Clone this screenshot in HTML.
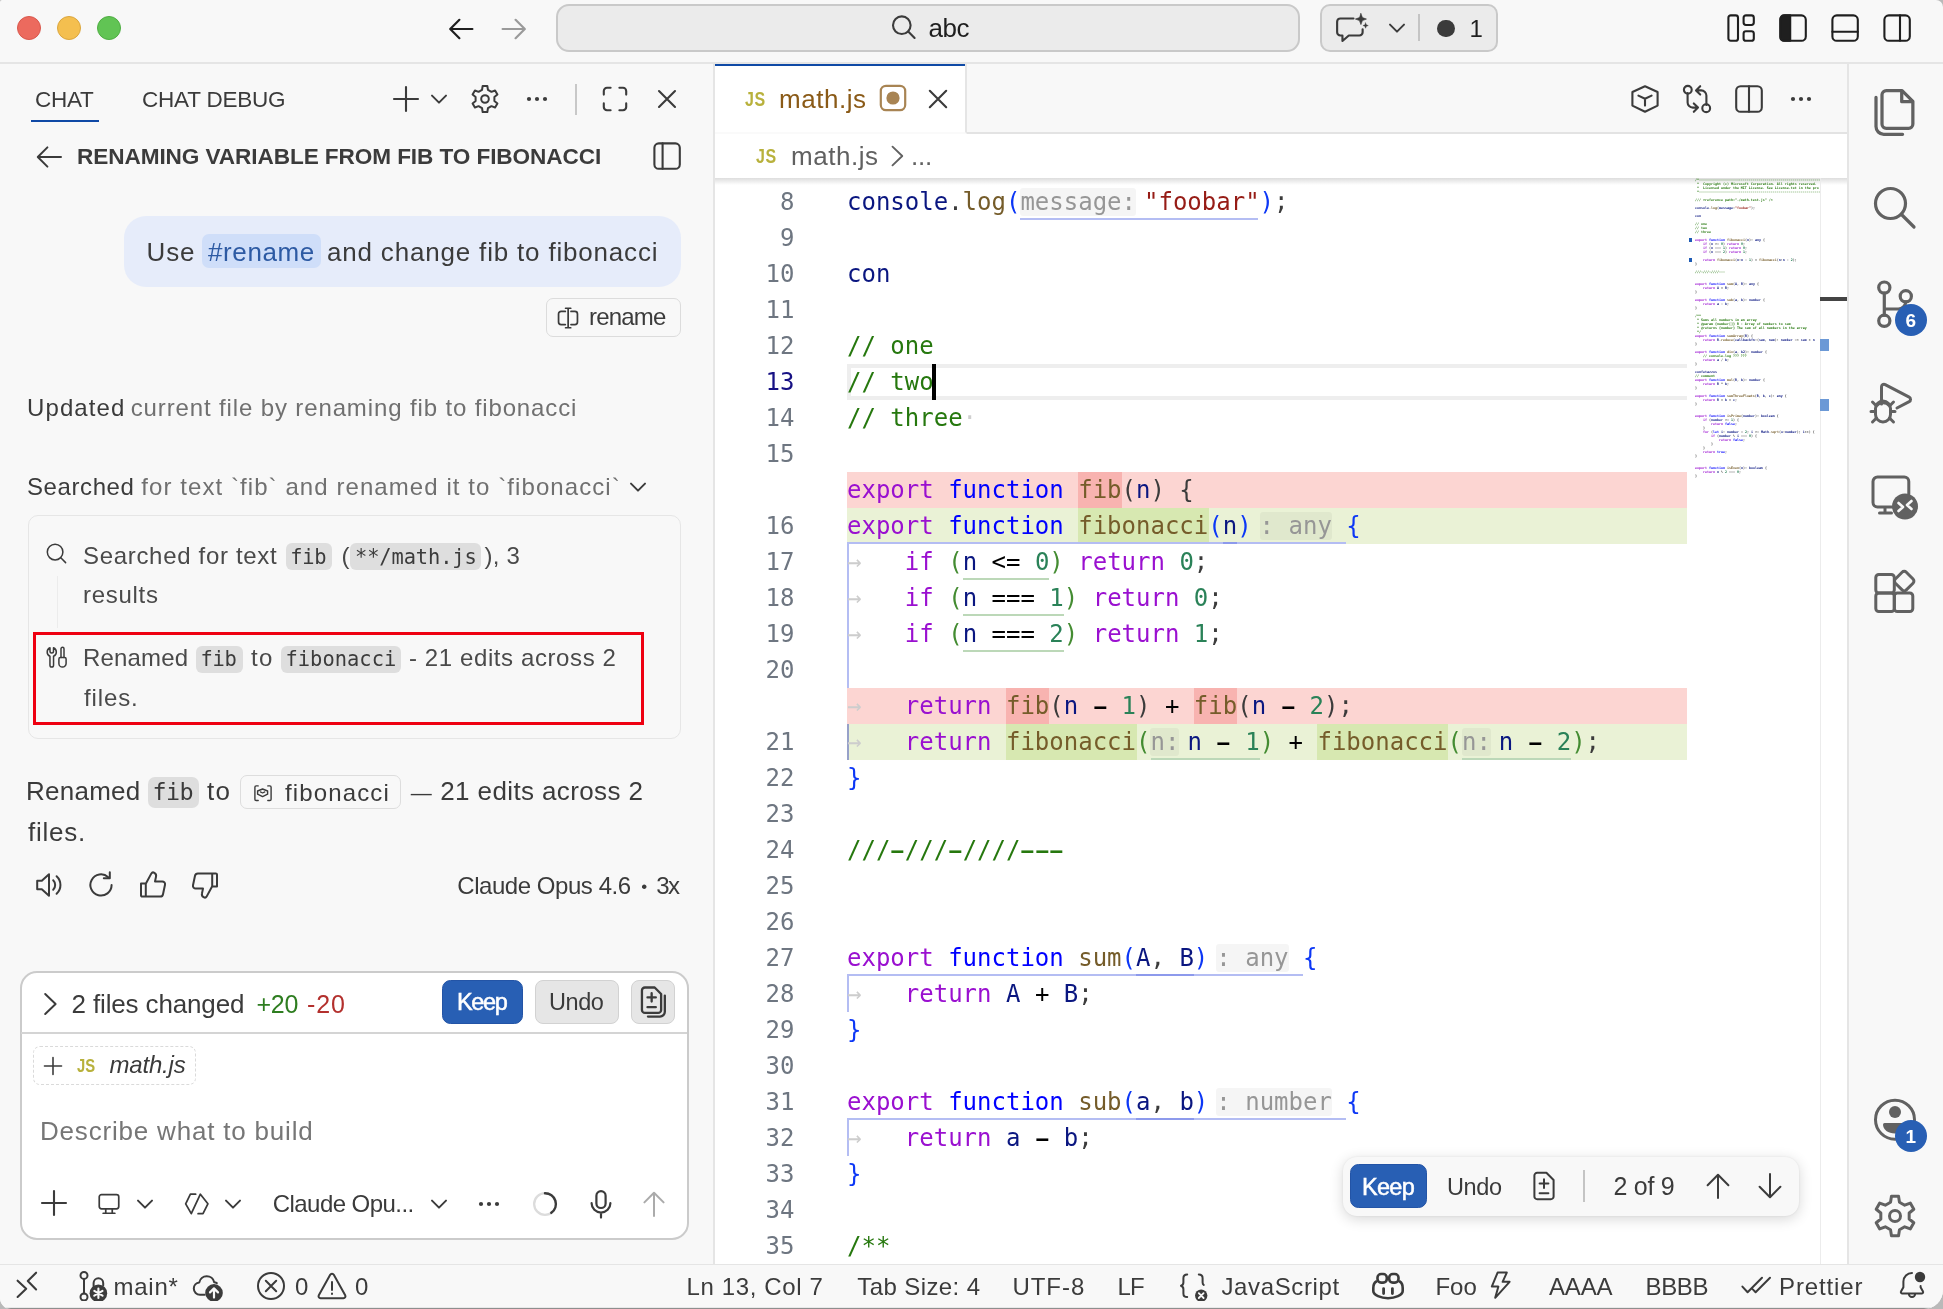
<!DOCTYPE html>
<html lang="en"><head><meta charset="utf-8"><title>math.js</title><style>
html,body{margin:0;padding:0;background:#b9b9b9;}
#root{will-change:transform;border-radius:2px 7px 19px 11px;position:relative;width:1943px;height:1309px;overflow:hidden;font-family:"Liberation Sans",sans-serif;}
#root div,#root svg,#root span.t{position:absolute;box-sizing:border-box;}
span.t{white-space:pre;}
.code{position:absolute;white-space:pre;font:24px/36px "DejaVu Sans Mono","Liberation Mono",monospace;color:#3b3b3b;}
.code span{position:static;}
</style></head><body><div id="root">
<div style="left:0px;top:0px;width:1943px;height:1309px;background:#f8f8f8"></div>
<div style="left:0px;top:62px;width:1943px;height:2px;background:#e5e5e5"></div>
<div style="left:715px;top:64px;width:1133px;height:1200px;background:#fff"></div>
<div style="left:713px;top:64px;width:2px;height:1200px;background:#e5e5e5"></div>
<div style="left:1847px;top:64px;width:2px;height:1200px;background:#e5e5e5"></div>
<div style="left:1849px;top:64px;width:94px;height:1200px;background:#f8f8f8"></div>
<div style="left:0px;top:1264px;width:1943px;height:1px;background:#e5e5e5"></div>
<div style="left:0px;top:1265px;width:1943px;height:44px;background:#f8f8f8"></div>
<div style="left:17px;top:16px;width:24px;height:24px;background:#ec6a5e;border-radius:50%;border:1px solid #d9584d"></div>
<div style="left:57px;top:16px;width:24px;height:24px;background:#f4bf4f;border-radius:50%;border:1px solid #dba63e"></div>
<div style="left:97px;top:16px;width:24px;height:24px;background:#61c454;border-radius:50%;border:1px solid #4fae43"></div>
<svg style="left:445px;top:13px;" width="32" height="32" viewBox="0 0 16 16" fill="none" stroke="#1f1f1f" stroke-width="1.1" stroke-linecap="round" stroke-linejoin="round"><path d="M13.700 8H2.800M7.200 3.400L2.600 8l4.600 4.600"/></svg>
<svg style="left:498px;top:13px;" width="32" height="32" viewBox="0 0 16 16" fill="none" stroke="#9a9a9a" stroke-width="1.1" stroke-linecap="round" stroke-linejoin="round"><path d="M2.300 8h10.900M8.800 3.400L13.400 8l-4.600 4.600"/></svg>
<div style="left:556px;top:4px;width:744px;height:48px;background:#ebebeb;border:2px solid #c9c9c9;border-radius:13px"></div>
<svg style="left:888px;top:11px;" width="32" height="32" viewBox="0 0 16 16" fill="none" stroke="#3b3b3b" stroke-width="1.05" stroke-linecap="round" stroke-linejoin="round"><circle cx="6.900" cy="7.100" r="4.400"/><path d="M10.100 10.300l3.200 3.200"/></svg>
<span class="t" style='left:928.50px;top:13.00px;font:400 26px/30px "Liberation Sans", sans-serif;color:#1f1f1f;letter-spacing:-0.460px;'>abc</span>
<div style="left:1320px;top:4px;width:178px;height:48px;background:#ebebeb;border:2px solid #c9c9c9;border-radius:10px"></div>
<svg style="left:1335px;top:11px;" width="34" height="34" viewBox="0 0 16 16" fill="none" stroke="#3b3b3b" stroke-width="1.0" stroke-linecap="round" stroke-linejoin="round"><path d="M2.5 3.5h6.2M2.5 3.5a1.5 1.5 0 0 0-1.5 1.5v5a1.5 1.5 0 0 0 1.5 1.5h1v2.6l3-2.6h5a1.5 1.5 0 0 0 1.5-1.5V8.6"/><path d="M12.2 1.2l.7 1.9 1.9.7-1.9.7-.7 1.9-.7-1.9-1.9-.7 1.9-.7z" fill="#3b3b3b" stroke-width=".3"/><path d="M14.4 5.6l.35.9.9.35-.9.35-.35.9-.35-.9-.9-.35.9-.35z" fill="#3b3b3b" stroke-width=".2"/></svg>
<svg style="left:1381px;top:12px;" width="32" height="32" viewBox="0 0 16 16" fill="none" stroke="#3b3b3b" stroke-width="1.0" stroke-linecap="round" stroke-linejoin="round"><path d="M4.500 6.300L8 9.800l3.500-3.500"/></svg>
<div style="left:1418px;top:14px;width:2px;height:27px;background:#c4c4c4"></div>
<div style="left:1437px;top:19.5px;width:17.5px;height:17.5px;background:#3b3b3b;border-radius:50%"></div>
<span class="t" style='left:1469.50px;top:14.50px;font:400 24px/27px "Liberation Sans", sans-serif;color:#1f1f1f;letter-spacing:0.000px;'>1</span>
<svg style="left:1725px;top:12px;" width="32" height="32" viewBox="0 0 16 16" fill="none" stroke="#1f1f1f" stroke-width="1.05" stroke-linecap="round" stroke-linejoin="round"><rect x="1.700" y="1.700" width="4.800" height="12.700" rx="1.200"/><rect x="9.300" y="1.700" width="5.100" height="4.800" rx="1.200"/><rect x="9.300" y="9.600" width="5.100" height="4.800" rx="1.200"/></svg>
<svg style="left:1777px;top:12px;" width="32" height="32" viewBox="0 0 16 16" fill="none" stroke="#1f1f1f" stroke-width="1.05" stroke-linecap="round" stroke-linejoin="round"><rect x="1.700" y="1.700" width="12.700" height="12.700" rx="2.200"/><path d="M3.400 1.700h3.200v12.700H3.400a1.700 1.700 0 0 1-1.700-1.700V3.400A1.700 1.700 0 0 1 3.400 1.700z" fill="#1f1f1f"/></svg>
<svg style="left:1829px;top:12px;" width="32" height="32" viewBox="0 0 16 16" fill="none" stroke="#1f1f1f" stroke-width="1.05" stroke-linecap="round" stroke-linejoin="round"><rect x="1.700" y="1.700" width="12.700" height="12.700" rx="2.200"/><path d="M1.700 9.900h12.700"/></svg>
<svg style="left:1881px;top:12px;" width="32" height="32" viewBox="0 0 16 16" fill="none" stroke="#1f1f1f" stroke-width="1.05" stroke-linecap="round" stroke-linejoin="round"><rect x="1.700" y="1.700" width="12.700" height="12.700" rx="2.200"/><path d="M9.500 1.700v12.700"/></svg>
<span class="t" style='left:35.00px;top:87.00px;font:400 22.5px/25px "Liberation Sans", sans-serif;color:#3b3b3b;letter-spacing:-0.278px;'>CHAT</span>
<div style="left:31px;top:120px;width:68px;height:2px;background:#0f49a6"></div>
<span class="t" style='left:142.00px;top:87.00px;font:400 22.5px/25px "Liberation Sans", sans-serif;color:#3b3b3b;letter-spacing:-0.205px;'>CHAT DEBUG</span>
<svg style="left:390px;top:82.5px;" width="32" height="32" viewBox="0 0 16 16" fill="none" stroke="#3b3b3b" stroke-width="1.05" stroke-linecap="round" stroke-linejoin="round"><path d="M8 2v12M2 8h12"/></svg>
<svg style="left:423px;top:82.5px;" width="32" height="32" viewBox="0 0 16 16" fill="none" stroke="#3b3b3b" stroke-width="1.0" stroke-linecap="round" stroke-linejoin="round"><path d="M4.500 6.300L8 9.800l3.500-3.500"/></svg>
<svg style="left:469px;top:83px;" width="32" height="32" viewBox="0 0 16 16" fill="none" stroke="#3b3b3b" stroke-width="1.0" stroke-linecap="round" stroke-linejoin="round"><path d="M6.52 3.43L6.83 1.50L9.17 1.50L9.48 3.43L11.21 4.43L13.04 3.74L14.21 5.76L12.70 7.00L12.70 9.00L14.21 10.24L13.04 12.26L11.21 11.57L9.48 12.57L9.17 14.50L6.83 14.50L6.52 12.57L4.79 11.57L2.96 12.26L1.79 10.24L3.30 9.00L3.30 7.00L1.79 5.76L2.96 3.74L4.79 4.43Z"/><circle cx="8" cy="8" r="1.9"/></svg>
<svg style="left:520.5px;top:83px;" width="32" height="32" viewBox="0 0 16 16" fill="none" stroke="#3b3b3b" stroke-width="1" stroke-linecap="round" stroke-linejoin="round"><circle cx="4" cy="8" r="1.050" fill="#3b3b3b" stroke="none"/><circle cx="8" cy="8" r="1.050" fill="#3b3b3b" stroke="none"/><circle cx="12" cy="8" r="1.050" fill="#3b3b3b" stroke="none"/></svg>
<div style="left:575px;top:84px;width:2px;height:31px;background:#c8c8c8"></div>
<svg style="left:599px;top:82.5px;" width="32" height="32" viewBox="0 0 16 16" fill="none" stroke="#3b3b3b" stroke-width="1.05" stroke-linecap="round" stroke-linejoin="round"><path d="M2.400 5.800V4A1.600 1.600 0 0 1 4 2.400h1.800M10.200 2.400H12A1.600 1.600 0 0 1 13.600 4v1.800M13.600 10.200V12a1.600 1.600 0 0 1-1.600 1.600h-1.800M5.800 13.600H4A1.600 1.600 0 0 1 2.400 12v-1.800"/></svg>
<svg style="left:651px;top:83px;" width="32" height="32" viewBox="0 0 16 16" fill="none" stroke="#3b3b3b" stroke-width="1.05" stroke-linecap="round" stroke-linejoin="round"><path d="M4 4l8 8M12 4l-8 8"/></svg>
<svg style="left:33px;top:141px;" width="32" height="32" viewBox="0 0 16 16" fill="none" stroke="#3b3b3b" stroke-width="1.0" stroke-linecap="round" stroke-linejoin="round"><path d="M14 8H2.6M7.2 3.2L2.4 8l4.8 4.8"/></svg>
<span class="t" style='left:77.00px;top:144.00px;font:700 22.6px/25px "Liberation Sans", sans-serif;color:#3b3b3b;letter-spacing:-0.087px;'>RENAMING VARIABLE FROM FIB TO FIBONACCI</span>
<svg style="left:651px;top:140px;" width="32" height="32" viewBox="0 0 16 16" fill="none" stroke="#3b3b3b" stroke-width="1.05" stroke-linecap="round" stroke-linejoin="round"><rect x="1.700" y="1.700" width="12.700" height="12.700" rx="2.200"/><path d="M5.800 1.700v12.700"/></svg>
<div style="left:124px;top:216px;width:557px;height:71px;background:#e6ecfa;border-radius:22px"></div>
<span class="t" style='left:146.50px;top:236.50px;font:400 26px/30px "Liberation Sans", sans-serif;color:#3b3b3b;letter-spacing:0.862px;'>Use</span>
<div style="left:202px;top:234px;width:119px;height:34px;background:#cfdef9;border-radius:7px"></div>
<span class="t" style='left:208.00px;top:236.50px;font:400 26px/30px "Liberation Sans", sans-serif;color:#2d5aa3;letter-spacing:0.599px;'>#rename</span>
<span class="t" style='left:327.00px;top:236.50px;font:400 26px/30px "Liberation Sans", sans-serif;color:#3b3b3b;letter-spacing:0.815px;'>and change fib to fibonacci</span>
<div style="left:545.5px;top:297.5px;width:135px;height:39px;border:1.5px solid #dcdcdc;border-radius:7px;background:#f8f8f8"></div>
<svg style="left:556px;top:306px;" width="24" height="24" viewBox="0 0 16 16" fill="none" stroke="#3b3b3b" stroke-width="1.15" stroke-linecap="round" stroke-linejoin="round"><path d="M6.2 3.6H3.4A1.7 1.7 0 0 0 1.7 5.3v5.4a1.7 1.7 0 0 0 1.7 1.7h2.8M10 3.6h2.6a1.7 1.7 0 0 1 1.7 1.7v5.4a1.7 1.7 0 0 1-1.7 1.7H10M8.1 1.5v13M6.4 1.5h3.4M6.4 14.5h3.4"/></svg>
<span class="t" style='left:589.00px;top:303.00px;font:400 24px/27px "Liberation Sans", sans-serif;color:#3b3b3b;letter-spacing:-0.805px;'>rename</span>
<span class="t" style='left:27.00px;top:393.70px;font:400 24px/27px "Liberation Sans", sans-serif;color:#3b3b3b;letter-spacing:1.102px;'>Updated</span>
<span class="t" style='left:130.75px;top:393.70px;font:400 24px/27px "Liberation Sans", sans-serif;color:#707070;letter-spacing:0.868px;'>current file by renaming fib to fibonacci</span>
<span class="t" style='left:27.00px;top:472.60px;font:400 24px/27px "Liberation Sans", sans-serif;color:#3b3b3b;letter-spacing:0.587px;'>Searched</span>
<span class="t" style='left:141.25px;top:472.60px;font:400 24px/27px "Liberation Sans", sans-serif;color:#707070;letter-spacing:1.077px;'>for text `fib` and renamed it to `fibonacci`</span>
<svg style="left:622px;top:471px;" width="32" height="32" viewBox="0 0 16 16" fill="none" stroke="#3b3b3b" stroke-width="1.0" stroke-linecap="round" stroke-linejoin="round"><path d="M4.500 6.300L8 9.800l3.500-3.500"/></svg>
<div style="left:27.5px;top:514.5px;width:653.5px;height:224.5px;border:1.5px solid #e6e6e6;border-radius:10px;background:#f8f8f8"></div>
<svg style="left:44px;top:541px;" width="24" height="24" viewBox="0 0 16 16" fill="none" stroke="#3b3b3b" stroke-width="1.0" stroke-linecap="round" stroke-linejoin="round"><circle cx="7.4" cy="7.4" r="5.2"/><path d="M11.2 11.2l3.2 3.2"/></svg>
<div style="left:56.5px;top:576px;width:1.5px;height:52px;background:#ececec"></div>
<span class="t" style='left:83.00px;top:541.75px;font:400 24px/27px "Liberation Sans", sans-serif;color:#4a4a4a;letter-spacing:0.681px;'>Searched for text</span>
<div style="left:286px;top:543px;width:46px;height:27px;background:#dedede;border-radius:6px"></div>
<span class="t" style='left:290.25px;top:544.75px;font:400 20.4px/24px "DejaVu Sans Mono", "Liberation Mono", monospace;color:#3b3b3b;letter-spacing:-0.276px;'>fib</span>
<span class="t" style='left:341.50px;top:541.75px;font:400 24px/27px "Liberation Sans", sans-serif;color:#4a4a4a;letter-spacing:0.000px;'>(</span>
<div style="left:350px;top:543px;width:131px;height:27px;background:#dedede;border-radius:6px"></div>
<span class="t" style='left:355.00px;top:544.75px;font:400 20.4px/24px "DejaVu Sans Mono", "Liberation Mono", monospace;color:#3b3b3b;letter-spacing:-0.110px;'>**/math.js</span>
<span class="t" style='left:484.50px;top:541.75px;font:400 24px/27px "Liberation Sans", sans-serif;color:#4a4a4a;letter-spacing:0.224px;'>), 3</span>
<span class="t" style='left:83.00px;top:581.00px;font:400 24px/27px "Liberation Sans", sans-serif;color:#4a4a4a;letter-spacing:0.719px;'>results</span>
<div style="left:33px;top:632px;width:611px;height:92.5px;border:3.5px solid #ee0011"></div>
<svg style="left:45px;top:645px;" width="24" height="24" viewBox="0 0 24 24" fill="none" stroke="#3b3b3b" stroke-width="1.5" stroke-linecap="round" stroke-linejoin="round"><path d="M5 2.700V6.300a1.750 1.750 0 0 0 3.500 0V2.700A4.700 4.700 0 0 1 8.550 11.300V20.200a1.800 1.800 0 0 1-3.600 0V11.300A4.700 4.700 0 0 1 5 2.700z"/><path d="M16 12.400V3.800a1.500 1.500 0 0 1 3 0V12.400"/><path d="M13.900 13.900a1.500 1.500 0 0 1 1.500-1.500h4.200a1.500 1.500 0 0 1 1.500 1.500v4.500a3.600 3.600 0 0 1-7.200 0z"/></svg>
<span class="t" style='left:83.00px;top:644.00px;font:400 24px/27px "Liberation Sans", sans-serif;color:#4a4a4a;letter-spacing:0.173px;'>Renamed</span>
<div style="left:195.75px;top:646px;width:47px;height:27px;background:#dedede;border-radius:6px"></div>
<span class="t" style='left:200.50px;top:647.00px;font:400 20.4px/24px "DejaVu Sans Mono", "Liberation Mono", monospace;color:#3b3b3b;letter-spacing:-0.276px;'>fib</span>
<span class="t" style='left:251.00px;top:644.00px;font:400 24px/27px "Liberation Sans", sans-serif;color:#4a4a4a;letter-spacing:1.332px;'>to</span>
<div style="left:280.75px;top:646px;width:120px;height:27px;background:#dedede;border-radius:6px"></div>
<span class="t" style='left:285.50px;top:647.00px;font:400 20.4px/24px "DejaVu Sans Mono", "Liberation Mono", monospace;color:#3b3b3b;letter-spacing:0.036px;'>fibonacci</span>
<span class="t" style='left:409.00px;top:644.00px;font:400 24px/27px "Liberation Sans", sans-serif;color:#4a4a4a;letter-spacing:0.598px;'>- 21 edits across 2</span>
<span class="t" style='left:84.00px;top:684.00px;font:400 24px/27px "Liberation Sans", sans-serif;color:#4a4a4a;letter-spacing:0.864px;'>files.</span>
<span class="t" style='left:26.00px;top:776.00px;font:400 26px/30px "Liberation Sans", sans-serif;color:#3b3b3b;letter-spacing:0.246px;'>Renamed</span>
<div style="left:148px;top:777px;width:51px;height:30.5px;background:#dedede;border-radius:7px"></div>
<span class="t" style='left:152.50px;top:778.00px;font:400 23.4px/28px "DejaVu Sans Mono", "Liberation Mono", monospace;color:#3b3b3b;letter-spacing:-0.582px;'>fib</span>
<span class="t" style='left:207.00px;top:776.00px;font:400 26px/30px "Liberation Sans", sans-serif;color:#3b3b3b;letter-spacing:1.276px;'>to</span>
<div style="left:240px;top:775px;width:160.5px;height:34px;border:1.5px solid #dddddd;border-radius:7px;background:#f8f8f8"></div>
<svg style="left:251px;top:781px;" width="24" height="24" viewBox="0 0 24 24" fill="none" stroke="#3b3b3b" stroke-width="1.4" stroke-linecap="round" stroke-linejoin="round"><path d="M7.200 4.900H5.200a1.300 1.300 0 0 0-1.300 1.300v12a1.300 1.300 0 0 0 1.300 1.300h2M16.800 4.900h2a1.300 1.300 0 0 1 1.300 1.300v12a1.300 1.300 0 0 1-1.300 1.300h-2"/><path d="M11.600 8l5 2v3.200l-5 2.400-5-2.400V10z"/><path d="M9.400 10.900l2.200 1.100 2.200-1.100" stroke-width="1.200"/></svg>
<span class="t" style='left:285.00px;top:778.50px;font:400 24px/27px "Liberation Sans", sans-serif;color:#3b3b3b;letter-spacing:1.139px;'>fibonacci</span>
<span class="t" style='left:410.75px;top:781.00px;font:400 21px/23px "Liberation Sans", sans-serif;color:#3b3b3b;letter-spacing:0.000px;'>—</span>
<span class="t" style='left:440.25px;top:776.00px;font:400 26px/30px "Liberation Sans", sans-serif;color:#3b3b3b;letter-spacing:0.385px;'>21 edits across 2</span>
<span class="t" style='left:28.00px;top:816.50px;font:400 26px/30px "Liberation Sans", sans-serif;color:#3b3b3b;letter-spacing:0.753px;'>files.</span>
<svg style="left:33px;top:869px;" width="32" height="32" viewBox="0 0 16 16" fill="none" stroke="#3b3b3b" stroke-width="1.0" stroke-linecap="round" stroke-linejoin="round"><path d="M2.100 5.900h2.300l3.600-3.300v10.800L4.400 10.100H2.100z"/><path d="M10.100 5.600a3.400 3.400 0 0 1 0 4.800M11.800 3.600a6 6 0 0 1 0 8.800"/></svg>
<svg style="left:85px;top:869px;" width="32" height="32" viewBox="0 0 16 16" fill="none" stroke="#3b3b3b" stroke-width="1.0" stroke-linecap="round" stroke-linejoin="round"><path d="M13.3 8a5.3 5.3 0 1 1-1.7-3.9"/><path d="M12.4 1.6v3h-3"/></svg>
<svg style="left:137px;top:869px;" width="32" height="32" viewBox="0 0 16 16" fill="none" stroke="#3b3b3b" stroke-width="1.0" stroke-linecap="round" stroke-linejoin="round"><path d="M2 7.2h2.4v6.6H2.6A.6.6 0 0 1 2 13.2zM4.4 7.4l2.8-5.2c.3-.5 1-.6 1.5-.3.7.4 1 1.2.8 2L9 6.2h3.600a1.400 1.400 0 0 1 1.400 1.700l-1 4.700a1.500 1.500 0 0 1-1.500 1.200H4.400"/></svg>
<svg style="left:189px;top:869px;" width="32" height="32" viewBox="0 0 16 16" fill="none" stroke="#3b3b3b" stroke-width="1.0" stroke-linecap="round" stroke-linejoin="round"><path d="M14 8.800h-2.400V2.200h1.800a.6.6 0 0 1 .6.600zM11.600 8.600l-2.800 5.200c-.3.500-1 .600-1.500.300-.7-.4-1-1.200-.8-2L7 9.800H3.400A1.400 1.400 0 0 1 2 8.100l1-4.700a1.500 1.500 0 0 1 1.500-1.200h7.100"/></svg>
<span class="t" style='left:457.25px;top:871.75px;font:400 24px/27px "Liberation Sans", sans-serif;color:#3b3b3b;letter-spacing:-0.448px;'>Claude Opus 4.6</span>
<span class="t" style='left:641.30px;top:876.80px;font:400 17px/19px "Liberation Sans", sans-serif;color:#3b3b3b;letter-spacing:0.000px;'>•</span>
<span class="t" style='left:656.25px;top:871.75px;font:400 24px/27px "Liberation Sans", sans-serif;color:#3b3b3b;letter-spacing:-1.598px;'>3x</span>
<div style="left:19.5px;top:970.5px;width:669px;height:269px;border:2px solid #cbcbcb;border-radius:17px;background:#fff"></div>
<div style="left:21px;top:1032px;width:666px;height:2px;background:#d4d4d4"></div>
<svg style="left:34px;top:988px;" width="32" height="32" viewBox="0 0 16 16" fill="none" stroke="#3b3b3b" stroke-width="1.0" stroke-linecap="round" stroke-linejoin="round"><path d="M5.6 3l5.2 5-5.2 5"/></svg>
<span class="t" style='left:71.50px;top:988.50px;font:400 26px/30px "Liberation Sans", sans-serif;color:#3b3b3b;letter-spacing:-0.139px;'>2 files changed</span>
<span class="t" style='left:256.50px;top:989.50px;font:400 25px/28px "Liberation Sans", sans-serif;color:#2e7d20;letter-spacing:-0.252px;'>+20</span>
<span class="t" style='left:307.00px;top:989.50px;font:400 25px/28px "Liberation Sans", sans-serif;color:#b3302d;letter-spacing:0.885px;'>-20</span>
<div style="left:442px;top:980px;width:81px;height:44px;background:#285fb4;border:1px solid #2354a6;border-radius:8.5px"></div>
<span class="t" style='left:457.00px;top:989.00px;font:400 23.5px/26px "Liberation Sans", sans-serif;color:#ffffff;letter-spacing:-1.338px;-webkit-text-stroke:0.5px #ffffff;'>Keep</span>
<div style="left:535px;top:980px;width:84px;height:44px;background:#e6e6e6;border:1.5px solid #d2d2d2;border-radius:8px"></div>
<span class="t" style='left:549.00px;top:989.00px;font:400 23.5px/26px "Liberation Sans", sans-serif;color:#3b3b3b;letter-spacing:-0.453px;'>Undo</span>
<div style="left:630.75px;top:980px;width:44.5px;height:44px;background:#e6e6e6;border:1.5px solid #d2d2d2;border-radius:8px"></div>
<svg style="left:634.5px;top:983.5px;" width="37" height="37" viewBox="0 0 16 16" fill="none" stroke="#3b3b3b" stroke-width="1.0" stroke-linecap="round" stroke-linejoin="round"><path d="M3 2.800a1.300 1.300 0 0 1 1.300-1.300h4.200l2.800 2.800v6.900a1.300 1.300 0 0 1-1.300 1.300H4.300A1.300 1.300 0 0 1 3 11.200z"/><path d="M5.400 5.800h3.600M7.200 4v3.600M5.400 10h3.600"/><path d="M12.900 5v7a2.100 2.100 0 0 1-2.100 2.100H5.600"/></svg>
<div style="left:33px;top:1046px;width:163px;height:39px;border:1.5px dashed #dadada;border-radius:7px"></div>
<svg style="left:41px;top:1053.5px;" width="24" height="24" viewBox="0 0 16 16" fill="none" stroke="#3b3b3b" stroke-width="1.05" stroke-linecap="round" stroke-linejoin="round"><path d="M8 2.300v11.400M2.300 8h11.400"/></svg>
<span class="t" style='left:76.75px;top:1055.00px;font:700 19px/21px "Liberation Sans", sans-serif;color:#b8b13c;letter-spacing:-0.131px;transform:scaleX(0.78);transform-origin:0 0;'>JS</span>
<span class="t" style='left:109.50px;top:1050.50px;font:italic 400 24px/27px "Liberation Sans", sans-serif;color:#3b3b3b;letter-spacing:-0.184px;'>math.js</span>
<span class="t" style='left:40.00px;top:1116.00px;font:400 26px/30px "Liberation Sans", sans-serif;color:#767676;letter-spacing:0.805px;'>Describe what to build</span>
<svg style="left:38px;top:1187px;" width="32" height="32" viewBox="0 0 16 16" fill="none" stroke="#3b3b3b" stroke-width="1.05" stroke-linecap="round" stroke-linejoin="round"><path d="M8 2v12M2 8h12"/></svg>
<svg style="left:96px;top:1191px;" width="26" height="26" viewBox="0 0 16 16" fill="none" stroke="#3b3b3b" stroke-width="1.05" stroke-linecap="round" stroke-linejoin="round"><rect x="2" y="2.200" width="12" height="8.800" rx="1.400"/><path d="M6 11v2.600M10 11v2.600M4.400 13.700h7.200"/></svg>
<svg style="left:129px;top:1188px;" width="32" height="32" viewBox="0 0 16 16" fill="none" stroke="#3b3b3b" stroke-width="1.0" stroke-linecap="round" stroke-linejoin="round"><path d="M4.500 6.300L8 9.800l3.500-3.500"/></svg>
<svg style="left:182px;top:1190px;" width="28" height="28" viewBox="0 0 16 16" fill="none" stroke="#3b3b3b" stroke-width="1.0" stroke-linecap="round" stroke-linejoin="round"><path d="M7.800 2.400H4.800L2.100 7.900 5.300 13.500 10.500 2.400 14.800 7.900 12 13.500H9.200"/></svg>
<svg style="left:217px;top:1188px;" width="32" height="32" viewBox="0 0 16 16" fill="none" stroke="#3b3b3b" stroke-width="1.0" stroke-linecap="round" stroke-linejoin="round"><path d="M4.500 6.300L8 9.800l3.500-3.500"/></svg>
<span class="t" style='left:272.75px;top:1189.75px;font:400 24px/27px "Liberation Sans", sans-serif;color:#3b3b3b;letter-spacing:-0.556px;'>Claude Opu...</span>
<svg style="left:423px;top:1188px;" width="32" height="32" viewBox="0 0 16 16" fill="none" stroke="#3b3b3b" stroke-width="1.0" stroke-linecap="round" stroke-linejoin="round"><path d="M4.500 6.300L8 9.800l3.500-3.500"/></svg>
<svg style="left:473px;top:1188px;" width="32" height="32" viewBox="0 0 16 16" fill="none" stroke="#3b3b3b" stroke-width="1" stroke-linecap="round" stroke-linejoin="round"><circle cx="4" cy="8" r="1.050" fill="#3b3b3b" stroke="none"/><circle cx="8" cy="8" r="1.050" fill="#3b3b3b" stroke="none"/><circle cx="12" cy="8" r="1.050" fill="#3b3b3b" stroke="none"/></svg>
<svg style="left:531px;top:1190px;" width="28" height="28" viewBox="0 0 16 16" fill="none" stroke="#3b3b3b" stroke-width="1" stroke-linecap="round" stroke-linejoin="round"><circle cx="8" cy="8" r="6.200" stroke="#dcdcdc" stroke-width="1.300"/><path d="M8 1.800a6.200 6.200 0 0 1 3.600 11.250" stroke="#3b3b3b" stroke-width="1.400"/></svg>
<svg style="left:585px;top:1188px;" width="32" height="32" viewBox="0 0 16 16" fill="none" stroke="#3b3b3b" stroke-width="1.1" stroke-linecap="round" stroke-linejoin="round"><rect x="5.700" y="1.600" width="4.600" height="8.400" rx="2.300"/><path d="M3.300 7.600a4.700 4.700 0 0 0 9.400 0M8 12.400v2.400"/></svg>
<svg style="left:638px;top:1188px;" width="32" height="32" viewBox="0 0 16 16" fill="none" stroke="#ababab" stroke-width="1.0" stroke-linecap="round" stroke-linejoin="round"><path d="M8 14V2.600M3.200 7.200L8 2.400l4.800 4.800"/></svg>
<div style="left:715px;top:64px;width:1132px;height:70px;background:#f8f8f8;border-bottom:2px solid #e3e3e3"></div>
<div style="left:715px;top:64px;width:252px;height:70px;background:#fff;border-right:2px solid #e5e5e5;border-bottom:2px solid #fafafa"></div>
<div style="left:715px;top:64px;width:250px;height:2px;background:#0f4aa6"></div>
<span class="t" style='left:744.50px;top:88.00px;font:700 20px/22px "Liberation Sans", sans-serif;color:#b8b13c;letter-spacing:0.877px;transform:scaleX(0.8);transform-origin:0 0;'>JS</span>
<span class="t" style='left:779.00px;top:83.50px;font:400 26px/30px "Liberation Sans", sans-serif;color:#8a5a17;letter-spacing:0.533px;'>math.js</span>
<svg style="left:876.5px;top:82px;" width="32" height="32" viewBox="0 0 16 16" fill="none" stroke="#a88453" stroke-width="1.1" stroke-linecap="round" stroke-linejoin="round"><rect x="1.900" y="1.900" width="12.200" height="12.200" rx="2.600"/><circle cx="8" cy="8" r="3.300" fill="#a88453" stroke="none"/></svg>
<svg style="left:921.5px;top:83px;" width="32" height="32" viewBox="0 0 16 16" fill="none" stroke="#3b3b3b" stroke-width="1.05" stroke-linecap="round" stroke-linejoin="round"><path d="M3.900 3.900l8.200 8.200M12.100 3.900l-8.200 8.200"/></svg>
<svg style="left:1629px;top:83px;" width="32" height="32" viewBox="0 0 16 16" fill="none" stroke="#3b3b3b" stroke-width="1.05" stroke-linecap="round" stroke-linejoin="round"><path d="M8 1.600l6.300 2.900v6.800L8 14.400l-6.300-3.100V4.500z"/><path d="M4.700 6.300L8 7.900l3.300-1.600M8 7.900v3.400"/></svg>
<svg style="left:1681px;top:83px;" width="32" height="32" viewBox="0 0 16 16" fill="none" stroke="#3b3b3b" stroke-width="1.05" stroke-linecap="round" stroke-linejoin="round"><circle cx="3.400" cy="3.400" r="1.950"/><circle cx="12.600" cy="12.600" r="1.950"/><path d="M3.300 5v4.700a2.600 2.600 0 0 0 2.600 2.600h2.400M6.400 10.200l2.100 2.100-2.100 2.100M12.700 11V6.300a2.600 2.600 0 0 0-2.600-2.600H7.700M9.600 5.800L7.500 3.700l2.100-2.100"/></svg>
<svg style="left:1733px;top:83px;" width="32" height="32" viewBox="0 0 16 16" fill="none" stroke="#3b3b3b" stroke-width="1.05" stroke-linecap="round" stroke-linejoin="round"><rect x="1.600" y="1.600" width="12.800" height="12.800" rx="2.200"/><path d="M8 1.600v12.800"/></svg>
<svg style="left:1785px;top:83px;" width="32" height="32" viewBox="0 0 16 16" fill="none" stroke="#3b3b3b" stroke-width="1" stroke-linecap="round" stroke-linejoin="round"><circle cx="4" cy="8" r="1.050" fill="#3b3b3b" stroke="none"/><circle cx="8" cy="8" r="1.050" fill="#3b3b3b" stroke="none"/><circle cx="12" cy="8" r="1.050" fill="#3b3b3b" stroke="none"/></svg>
<span class="t" style='left:756.00px;top:145.00px;font:700 20px/22px "Liberation Sans", sans-serif;color:#b8b13c;letter-spacing:0.877px;transform:scaleX(0.8);transform-origin:0 0;'>JS</span>
<span class="t" style='left:791.00px;top:141.00px;font:400 26px/30px "Liberation Sans", sans-serif;color:#616161;letter-spacing:0.533px;'>math.js</span>
<svg style="left:882px;top:141px;" width="30" height="30" viewBox="0 0 16 16" fill="none" stroke="#616161" stroke-width="1.0" stroke-linecap="round" stroke-linejoin="round"><path d="M5.600 3l5.200 5-5.200 5"/></svg>
<span class="t" style='left:911.00px;top:141.00px;font:400 26px/30px "Liberation Sans", sans-serif;color:#616161;letter-spacing:-0.224px;'>...</span>
<div style="left:715px;top:178px;width:1132px;height:7px;background:linear-gradient(#dddddd,rgba(221,221,221,0))"></div>
<div style="left:847px;top:472px;width:840px;height:36px;background:#fcd5d2"></div>
<div style="left:1078.2px;top:472px;width:43.4px;height:36px;background:#f8b3b0"></div>
<div style="left:847px;top:508px;width:840px;height:36px;background:#eaf2d6"></div>
<div style="left:1078.2px;top:508px;width:131px;height:36px;background:#d7e8b1"></div>
<div style="left:847px;top:688px;width:840px;height:36px;background:#fcd5d2"></div>
<div style="left:1005.9px;top:688px;width:43.4px;height:36px;background:#f8b3b0"></div>
<div style="left:1193.8px;top:688px;width:43.4px;height:36px;background:#f8b3b0"></div>
<div style="left:847px;top:724px;width:840px;height:36px;background:#eaf2d6"></div>
<div style="left:1005.9px;top:724px;width:131px;height:36px;background:#d7e8b1"></div>
<div style="left:1317px;top:724px;width:131px;height:36px;background:#d7e8b1"></div>
<div style="left:847px;top:364px;width:840px;height:36px;border:4px solid #eeeeee;border-right:none"></div>
<div style="left:847px;top:542px;width:499px;height:2px;background:#b4bdf3"></div>
<div style="left:1222.7px;top:542px;width:14.4px;height:2px;background:#8d9aec"></div>
<div style="left:847px;top:544px;width:2px;height:144px;background:#b4bdf3"></div>
<div style="left:847px;top:724px;width:2px;height:36px;background:#97a1c9"></div>
<div style="left:1020.4px;top:217.8px;width:237.8px;height:2px;background:#b4bdf3"></div>
<div style="left:962.6px;top:578px;width:86.69999999999993px;height:1.5px;background:#bcd8b8"></div>
<div style="left:962.6px;top:614px;width:101.10000000000002px;height:1.5px;background:#bcd8b8"></div>
<div style="left:962.6px;top:650px;width:101.10000000000002px;height:1.5px;background:#bcd8b8"></div>
<div style="left:1150.5px;top:758px;width:109px;height:1.5px;background:#bcd8b8"></div>
<div style="left:1461.5px;top:758px;width:109px;height:1.5px;background:#bcd8b8"></div>
<div style="left:847px;top:974px;width:456px;height:2px;background:#b4bdf3"></div>
<div style="left:1136px;top:974px;width:57.8px;height:2px;background:#8d9aec"></div>
<div style="left:847px;top:976px;width:2px;height:36px;background:#b4bdf3"></div>
<div style="left:847px;top:1118px;width:499px;height:2px;background:#b4bdf3"></div>
<div style="left:1136px;top:1118px;width:57.8px;height:2px;background:#8d9aec"></div>
<div style="left:847px;top:1120px;width:2px;height:36px;background:#b4bdf3"></div>
<div class="code" style="left:715px;width:79.5px;text-align:right;top:184px;color:#6e7681">8</div>
<div class="code" style="left:847px;top:184px"><span style="color:#0a1680">console</span><span style="color:#3b3b3b">.</span><span style="color:#755c2a">log</span><span style="color:#0c37f6">(</span><span style="color:#969696;background:rgba(0,0,0,.04);border-radius:3px;margin-right:8px">message:</span><span style="color:#961c16">&quot;foobar&quot;</span><span style="color:#0c37f6">)</span><span style="color:#3b3b3b">;</span></div>
<div class="code" style="left:715px;width:79.5px;text-align:right;top:220px;color:#6e7681">9</div>
<div class="code" style="left:715px;width:79.5px;text-align:right;top:256px;color:#6e7681">10</div>
<div class="code" style="left:847px;top:256px"><span style="color:#0a1680">con</span></div>
<div class="code" style="left:715px;width:79.5px;text-align:right;top:292px;color:#6e7681">11</div>
<div class="code" style="left:715px;width:79.5px;text-align:right;top:328px;color:#6e7681">12</div>
<div class="code" style="left:847px;top:328px"><span style="color:#26780e">// one</span></div>
<div class="code" style="left:715px;width:79.5px;text-align:right;top:364px;color:#171184">13</div>
<div class="code" style="left:847px;top:364px"><span style="color:#26780e">// two</span></div>
<div class="code" style="left:715px;width:79.5px;text-align:right;top:400px;color:#6e7681">14</div>
<div class="code" style="left:847px;top:400px"><span style="color:#26780e">// three</span><span style="color:#cfcfcf">·</span></div>
<div class="code" style="left:715px;width:79.5px;text-align:right;top:436px;color:#6e7681">15</div>
<div class="code" style="left:847px;top:472px"><span style="color:#9a10d0">export</span> <span style="color:#0000ff">function</span> <span style="color:#755c2a">fib</span><span style="color:#3b3b3b">(</span><span style="color:#0a1680">n</span><span style="color:#3b3b3b">) {</span></div>
<div class="code" style="left:715px;width:79.5px;text-align:right;top:508px;color:#6e7681">16</div>
<div class="code" style="left:847px;top:508px"><span style="color:#9a10d0">export</span> <span style="color:#0000ff">function</span> <span style="color:#755c2a">fibonacci</span><span style="color:#0c37f6">(</span><span style="color:#0a1680">n</span><span style="color:#0c37f6">)</span><span style="color:#969696;background:rgba(0,0,0,.04);border-radius:3px;margin-left:8px">: any</span> <span style="color:#0c37f6">{</span></div>
<div class="code" style="left:715px;width:79.5px;text-align:right;top:544px;color:#6e7681">17</div>
<div class="code" style="left:847px;top:544px"><span style="color:#cdcdcd">→</span>   <span style="color:#9a10d0">if</span> <span style="color:#448c32">(</span><span style="color:#0a1680">n</span> <span style="color:#000000">&lt;=</span> <span style="color:#2a8258">0</span><span style="color:#448c32">)</span> <span style="color:#9a10d0">return</span> <span style="color:#2a8258">0</span><span style="color:#3b3b3b">;</span></div>
<div class="code" style="left:715px;width:79.5px;text-align:right;top:580px;color:#6e7681">18</div>
<div class="code" style="left:847px;top:580px"><span style="color:#cdcdcd">→</span>   <span style="color:#9a10d0">if</span> <span style="color:#448c32">(</span><span style="color:#0a1680">n</span> <span style="color:#000000">===</span> <span style="color:#2a8258">1</span><span style="color:#448c32">)</span> <span style="color:#9a10d0">return</span> <span style="color:#2a8258">0</span><span style="color:#3b3b3b">;</span></div>
<div class="code" style="left:715px;width:79.5px;text-align:right;top:616px;color:#6e7681">19</div>
<div class="code" style="left:847px;top:616px"><span style="color:#cdcdcd">→</span>   <span style="color:#9a10d0">if</span> <span style="color:#448c32">(</span><span style="color:#0a1680">n</span> <span style="color:#000000">===</span> <span style="color:#2a8258">2</span><span style="color:#448c32">)</span> <span style="color:#9a10d0">return</span> <span style="color:#2a8258">1</span><span style="color:#3b3b3b">;</span></div>
<div class="code" style="left:715px;width:79.5px;text-align:right;top:652px;color:#6e7681">20</div>
<div class="code" style="left:847px;top:688px"><span style="color:#cdcdcd">→</span>   <span style="color:#9a10d0">return</span> <span style="color:#755c2a">fib</span><span style="color:#3b3b3b">(</span><span style="color:#0a1680">n</span> <span style="color:#000000"><span style="display:inline-block;transform:scale(1.95,1.35)">-</span></span> <span style="color:#2a8258">1</span><span style="color:#3b3b3b">)</span> <span style="color:#000000">+</span> <span style="color:#755c2a">fib</span><span style="color:#3b3b3b">(</span><span style="color:#0a1680">n</span> <span style="color:#000000"><span style="display:inline-block;transform:scale(1.95,1.35)">-</span></span> <span style="color:#2a8258">2</span><span style="color:#3b3b3b">);</span></div>
<div class="code" style="left:715px;width:79.5px;text-align:right;top:724px;color:#6e7681">21</div>
<div class="code" style="left:847px;top:724px"><span style="color:#cdcdcd">→</span>   <span style="color:#9a10d0">return</span> <span style="color:#755c2a">fibonacci</span><span style="color:#448c32">(</span><span style="color:#969696;background:rgba(0,0,0,.04);border-radius:3px;margin-right:8px">n:</span><span style="color:#0a1680">n</span> <span style="color:#000000"><span style="display:inline-block;transform:scale(1.95,1.35)">-</span></span> <span style="color:#2a8258">1</span><span style="color:#448c32">)</span> <span style="color:#000000">+</span> <span style="color:#755c2a">fibonacci</span><span style="color:#448c32">(</span><span style="color:#969696;background:rgba(0,0,0,.04);border-radius:3px;margin-right:8px">n:</span><span style="color:#0a1680">n</span> <span style="color:#000000"><span style="display:inline-block;transform:scale(1.95,1.35)">-</span></span> <span style="color:#2a8258">2</span><span style="color:#448c32">)</span><span style="color:#3b3b3b">;</span></div>
<div class="code" style="left:715px;width:79.5px;text-align:right;top:760px;color:#6e7681">22</div>
<div class="code" style="left:847px;top:760px"><span style="color:#0c37f6">}</span></div>
<div class="code" style="left:715px;width:79.5px;text-align:right;top:796px;color:#6e7681">23</div>
<div class="code" style="left:715px;width:79.5px;text-align:right;top:832px;color:#6e7681">24</div>
<div class="code" style="left:847px;top:832px"><span style="color:#26780e">///<span style="display:inline-block;transform:scale(1.95,1.35)">-</span>///<span style="display:inline-block;transform:scale(1.95,1.35)">-</span>////<span style="display:inline-block;transform:scale(1.95,1.35)">-</span><span style="display:inline-block;transform:scale(1.95,1.35)">-</span><span style="display:inline-block;transform:scale(1.95,1.35)">-</span></span></div>
<div class="code" style="left:715px;width:79.5px;text-align:right;top:868px;color:#6e7681">25</div>
<div class="code" style="left:715px;width:79.5px;text-align:right;top:904px;color:#6e7681">26</div>
<div class="code" style="left:715px;width:79.5px;text-align:right;top:940px;color:#6e7681">27</div>
<div class="code" style="left:847px;top:940px"><span style="color:#9a10d0">export</span> <span style="color:#0000ff">function</span> <span style="color:#755c2a">sum</span><span style="color:#0c37f6">(</span><span style="color:#0a1680">A</span><span style="color:#3b3b3b">, </span><span style="color:#0a1680">B</span><span style="color:#0c37f6">)</span><span style="color:#969696;background:rgba(0,0,0,.04);border-radius:3px;margin-left:8px">: any</span> <span style="color:#0c37f6">{</span></div>
<div class="code" style="left:715px;width:79.5px;text-align:right;top:976px;color:#6e7681">28</div>
<div class="code" style="left:847px;top:976px"><span style="color:#cdcdcd">→</span>   <span style="color:#9a10d0">return</span> <span style="color:#0a1680">A</span> <span style="color:#000000">+</span> <span style="color:#0a1680">B</span><span style="color:#3b3b3b">;</span></div>
<div class="code" style="left:715px;width:79.5px;text-align:right;top:1012px;color:#6e7681">29</div>
<div class="code" style="left:847px;top:1012px"><span style="color:#0c37f6">}</span></div>
<div class="code" style="left:715px;width:79.5px;text-align:right;top:1048px;color:#6e7681">30</div>
<div class="code" style="left:715px;width:79.5px;text-align:right;top:1084px;color:#6e7681">31</div>
<div class="code" style="left:847px;top:1084px"><span style="color:#9a10d0">export</span> <span style="color:#0000ff">function</span> <span style="color:#755c2a">sub</span><span style="color:#0c37f6">(</span><span style="color:#0a1680">a</span><span style="color:#3b3b3b">, </span><span style="color:#0a1680">b</span><span style="color:#0c37f6">)</span><span style="color:#969696;background:rgba(0,0,0,.04);border-radius:3px;margin-left:8px">: number</span> <span style="color:#0c37f6">{</span></div>
<div class="code" style="left:715px;width:79.5px;text-align:right;top:1120px;color:#6e7681">32</div>
<div class="code" style="left:847px;top:1120px"><span style="color:#cdcdcd">→</span>   <span style="color:#9a10d0">return</span> <span style="color:#0a1680">a</span> <span style="color:#000000"><span style="display:inline-block;transform:scale(1.95,1.35)">-</span></span> <span style="color:#0a1680">b</span><span style="color:#3b3b3b">;</span></div>
<div class="code" style="left:715px;width:79.5px;text-align:right;top:1156px;color:#6e7681">33</div>
<div class="code" style="left:847px;top:1156px"><span style="color:#0c37f6">}</span></div>
<div class="code" style="left:715px;width:79.5px;text-align:right;top:1192px;color:#6e7681">34</div>
<div class="code" style="left:715px;width:79.5px;text-align:right;top:1228px;color:#6e7681">35</div>
<div class="code" style="left:847px;top:1228px"><span style="color:#26780e">/**</span></div>
<div style="left:931.5px;top:364px;width:4px;height:36px;background:#000"></div>
<div style="left:1695px;top:178px;width:125px;height:320px;overflow:hidden;white-space:pre;font:bold 3.32px/4px 'DejaVu Sans Mono',monospace"><div style="position:static;height:4px"><span style="color:#26780e">/*---------------------------------------------------------------</span></div><div style="position:static;height:4px"><span style="color:#26780e"> *  Copyright (c) Microsoft Corporation. All rights reserved.</span></div><div style="position:static;height:4px"><span style="color:#26780e"> *  Licensed under the MIT License. See License.txt in the pro</span></div><div style="position:static;height:4px"><span style="color:#26780e"> *--------------------------------------------------------------</span></div><div style="position:static;height:4px"></div><div style="position:static;height:4px"><span style="color:#26780e">/// &lt;reference path=&quot;./math.test.js&quot; /&gt;</span></div><div style="position:static;height:4px"></div><div style="position:static;height:4px"><span style="color:#0a1680">console</span><span style="color:#555">.</span><span style="color:#755c2a">log</span><span style="color:#555">(</span><span style="color:#0a1680">message</span><span style="color:#555">:</span><span style="color:#961c16">&quot;foobar&quot;</span><span style="color:#555">)</span><span style="color:#555">;</span></div><div style="position:static;height:4px"></div><div style="position:static;height:4px"><span style="color:#0a1680">con</span></div><div style="position:static;height:4px"></div><div style="position:static;height:4px"><span style="color:#26780e">// one</span></div><div style="position:static;height:4px"><span style="color:#26780e">// two</span></div><div style="position:static;height:4px"><span style="color:#26780e">// three</span></div><div style="position:static;height:4px"></div><div style="position:static;height:4px"><span style="color:#9a10d0">export</span> <span style="color:#0000ff">function</span> <span style="color:#755c2a">fibonacci</span><span style="color:#555">(</span><span style="color:#0a1680">n</span><span style="color:#555">)</span><span style="color:#555">:</span> <span style="color:#0a1680">any</span> <span style="color:#555">{</span></div><div style="position:static;height:4px">    <span style="color:#9a10d0">if</span> <span style="color:#555">(</span><span style="color:#0a1680">n</span> <span style="color:#555">&lt;</span><span style="color:#555">=</span> <span style="color:#2a8258">0</span><span style="color:#555">)</span> <span style="color:#9a10d0">return</span> <span style="color:#2a8258">0</span><span style="color:#555">;</span></div><div style="position:static;height:4px">    <span style="color:#9a10d0">if</span> <span style="color:#555">(</span><span style="color:#0a1680">n</span> <span style="color:#555">=</span><span style="color:#555">=</span><span style="color:#555">=</span> <span style="color:#2a8258">1</span><span style="color:#555">)</span> <span style="color:#9a10d0">return</span> <span style="color:#2a8258">0</span><span style="color:#555">;</span></div><div style="position:static;height:4px">    <span style="color:#9a10d0">if</span> <span style="color:#555">(</span><span style="color:#0a1680">n</span> <span style="color:#555">=</span><span style="color:#555">=</span><span style="color:#555">=</span> <span style="color:#2a8258">2</span><span style="color:#555">)</span> <span style="color:#9a10d0">return</span> <span style="color:#2a8258">1</span><span style="color:#555">;</span></div><div style="position:static;height:4px"></div><div style="position:static;height:4px">    <span style="color:#9a10d0">return</span> <span style="color:#755c2a">fibonacci</span><span style="color:#555">(</span><span style="color:#0a1680">n</span><span style="color:#555">:</span><span style="color:#0a1680">n</span> <span style="color:#555">-</span> <span style="color:#2a8258">1</span><span style="color:#555">)</span> <span style="color:#555">+</span> <span style="color:#755c2a">fibonacci</span><span style="color:#555">(</span><span style="color:#0a1680">n</span><span style="color:#555">:</span><span style="color:#0a1680">n</span> <span style="color:#555">-</span> <span style="color:#2a8258">2</span><span style="color:#555">)</span><span style="color:#555">;</span></div><div style="position:static;height:4px"><span style="color:#555">}</span></div><div style="position:static;height:4px"></div><div style="position:static;height:4px"><span style="color:#26780e">///-///-////---</span></div><div style="position:static;height:4px"></div><div style="position:static;height:4px"></div><div style="position:static;height:4px"><span style="color:#9a10d0">export</span> <span style="color:#0000ff">function</span> <span style="color:#755c2a">sum</span><span style="color:#555">(</span><span style="color:#0a1680">A</span><span style="color:#555">,</span> <span style="color:#0a1680">B</span><span style="color:#555">)</span><span style="color:#555">:</span> <span style="color:#0a1680">any</span> <span style="color:#555">{</span></div><div style="position:static;height:4px">    <span style="color:#9a10d0">return</span> <span style="color:#0a1680">A</span> <span style="color:#555">+</span> <span style="color:#0a1680">B</span><span style="color:#555">;</span></div><div style="position:static;height:4px"><span style="color:#555">}</span></div><div style="position:static;height:4px"></div><div style="position:static;height:4px"><span style="color:#9a10d0">export</span> <span style="color:#0000ff">function</span> <span style="color:#755c2a">sub</span><span style="color:#555">(</span><span style="color:#0a1680">a</span><span style="color:#555">,</span> <span style="color:#0a1680">b</span><span style="color:#555">)</span><span style="color:#555">:</span> <span style="color:#0a1680">number</span> <span style="color:#555">{</span></div><div style="position:static;height:4px">    <span style="color:#9a10d0">return</span> <span style="color:#0a1680">a</span> <span style="color:#555">-</span> <span style="color:#0a1680">b</span><span style="color:#555">;</span></div><div style="position:static;height:4px"><span style="color:#555">}</span></div><div style="position:static;height:4px"></div><div style="position:static;height:4px"><span style="color:#26780e">/**</span></div><div style="position:static;height:4px"><span style="color:#26780e"> * Sums all numbers in an array</span></div><div style="position:static;height:4px"><span style="color:#26780e"> * @param {number[]} B - Array of numbers to sum</span></div><div style="position:static;height:4px"><span style="color:#26780e"> * @returns {number} The sum of all numbers in the array</span></div><div style="position:static;height:4px"><span style="color:#26780e"> */</span></div><div style="position:static;height:4px"><span style="color:#9a10d0">export</span> <span style="color:#0000ff">function</span> <span style="color:#755c2a">sumArray</span><span style="color:#555">(</span><span style="color:#0a1680">B</span><span style="color:#555">)</span> <span style="color:#555">{</span></div><div style="position:static;height:4px">    <span style="color:#9a10d0">return</span> <span style="color:#0a1680">B</span><span style="color:#555">.</span><span style="color:#755c2a">reduce</span><span style="color:#555">(</span><span style="color:#0a1680">callbackfn</span><span style="color:#555">:</span><span style="color:#555">(</span><span style="color:#0a1680">sum</span><span style="color:#555">,</span> <span style="color:#0a1680">num</span><span style="color:#555">)</span><span style="color:#555">:</span> <span style="color:#0a1680">number</span> <span style="color:#555">=</span><span style="color:#555">&gt;</span> <span style="color:#0a1680">sum</span> <span style="color:#555">+</span> <span style="color:#0a1680">n</span></div><div style="position:static;height:4px"><span style="color:#555">}</span></div><div style="position:static;height:4px"></div><div style="position:static;height:4px"><span style="color:#9a10d0">export</span> <span style="color:#0000ff">function</span> <span style="color:#755c2a">div</span><span style="color:#555">(</span><span style="color:#0a1680">a</span><span style="color:#555">,</span> <span style="color:#0a1680">b2</span><span style="color:#555">)</span><span style="color:#555">:</span> <span style="color:#0a1680">number</span> <span style="color:#555">{</span></div><div style="position:static;height:4px"><span style="color:#26780e">    // console.log ??? ???</span></div><div style="position:static;height:4px">    <span style="color:#9a10d0">return</span> <span style="color:#0a1680">a</span> <span style="color:#555">/</span> <span style="color:#0a1680">b</span><span style="color:#555">;</span></div><div style="position:static;height:4px"><span style="color:#555">}</span></div><div style="position:static;height:4px"></div><div style="position:static;height:4px"><span style="color:#0a1680">confetazzos</span></div><div style="position:static;height:4px"><span style="color:#26780e">// comment</span></div><div style="position:static;height:4px"><span style="color:#9a10d0">export</span> <span style="color:#0000ff">function</span> <span style="color:#755c2a">mul</span><span style="color:#555">(</span><span style="color:#0a1680">B</span><span style="color:#555">,</span> <span style="color:#0a1680">b</span><span style="color:#555">)</span><span style="color:#555">:</span> <span style="color:#0a1680">number</span> <span style="color:#555">{</span></div><div style="position:static;height:4px">    <span style="color:#9a10d0">return</span> <span style="color:#0a1680">B</span> <span style="color:#555">*</span> <span style="color:#0a1680">b</span><span style="color:#555">;</span></div><div style="position:static;height:4px"><span style="color:#555">}</span></div><div style="position:static;height:4px"></div><div style="position:static;height:4px"><span style="color:#9a10d0">export</span> <span style="color:#0000ff">function</span> <span style="color:#755c2a">sumThreeFloats</span><span style="color:#555">(</span><span style="color:#0a1680">B</span><span style="color:#555">,</span> <span style="color:#0a1680">b</span><span style="color:#555">,</span> <span style="color:#0a1680">c</span><span style="color:#555">)</span><span style="color:#555">:</span> <span style="color:#0a1680">any</span> <span style="color:#555">{</span></div><div style="position:static;height:4px">    <span style="color:#9a10d0">return</span> <span style="color:#0a1680">B</span> <span style="color:#555">+</span> <span style="color:#0a1680">b</span> <span style="color:#555">+</span> <span style="color:#0a1680">c</span><span style="color:#555">;</span></div><div style="position:static;height:4px"><span style="color:#555">}</span></div><div style="position:static;height:4px"></div><div style="position:static;height:4px"></div><div style="position:static;height:4px"><span style="color:#9a10d0">export</span> <span style="color:#0000ff">function</span> <span style="color:#755c2a">isPrime</span><span style="color:#555">(</span><span style="color:#0a1680">number</span><span style="color:#555">)</span><span style="color:#555">:</span> <span style="color:#0a1680">boolean</span> <span style="color:#555">{</span></div><div style="position:static;height:4px">    <span style="color:#9a10d0">if</span> <span style="color:#555">(</span><span style="color:#0a1680">number</span> <span style="color:#555">&lt;</span><span style="color:#555">=</span> <span style="color:#2a8258">1</span><span style="color:#555">)</span> <span style="color:#555">{</span></div><div style="position:static;height:4px">        <span style="color:#9a10d0">return</span> <span style="color:#0000ff">false</span><span style="color:#555">;</span></div><div style="position:static;height:4px">    <span style="color:#555">}</span></div><div style="position:static;height:4px">    <span style="color:#9a10d0">for</span> <span style="color:#555">(</span><span style="color:#0000ff">let</span> <span style="color:#0a1680">i</span><span style="color:#555">:</span> <span style="color:#0a1680">number</span> <span style="color:#555">=</span> <span style="color:#2a8258">2</span><span style="color:#555">;</span> <span style="color:#0a1680">i</span> <span style="color:#555">&lt;</span><span style="color:#555">=</span> <span style="color:#0a1680">Math</span><span style="color:#555">.</span><span style="color:#755c2a">sqrt</span><span style="color:#555">(</span><span style="color:#0a1680">x</span><span style="color:#555">:</span><span style="color:#0a1680">number</span><span style="color:#555">)</span><span style="color:#555">;</span> <span style="color:#0a1680">i</span><span style="color:#555">+</span><span style="color:#555">+</span><span style="color:#555">)</span> <span style="color:#555">{</span></div><div style="position:static;height:4px">        <span style="color:#9a10d0">if</span> <span style="color:#555">(</span><span style="color:#0a1680">number</span> <span style="color:#555">%</span> <span style="color:#0a1680">i</span> <span style="color:#555">=</span><span style="color:#555">=</span><span style="color:#555">=</span> <span style="color:#2a8258">0</span><span style="color:#555">)</span> <span style="color:#555">{</span></div><div style="position:static;height:4px">            <span style="color:#9a10d0">return</span> <span style="color:#0000ff">false</span><span style="color:#555">;</span></div><div style="position:static;height:4px">        <span style="color:#555">}</span></div><div style="position:static;height:4px">    <span style="color:#555">}</span></div><div style="position:static;height:4px">    <span style="color:#9a10d0">return</span> <span style="color:#0000ff">true</span><span style="color:#555">;</span></div><div style="position:static;height:4px"><span style="color:#555">}</span></div><div style="position:static;height:4px"></div><div style="position:static;height:4px"></div><div style="position:static;height:4px"><span style="color:#9a10d0">export</span> <span style="color:#0000ff">function</span> <span style="color:#755c2a">isEven</span><span style="color:#555">(</span><span style="color:#0a1680">n</span><span style="color:#555">)</span><span style="color:#555">:</span> <span style="color:#0a1680">boolean</span> <span style="color:#555">{</span></div><div style="position:static;height:4px">    <span style="color:#9a10d0">return</span> <span style="color:#0a1680">n</span> <span style="color:#555">%</span> <span style="color:#2a8258">2</span> <span style="color:#555">=</span><span style="color:#555">=</span><span style="color:#555">=</span> <span style="color:#2a8258">0</span><span style="color:#555">;</span></div><div style="position:static;height:4px"><span style="color:#555">}</span></div></div>
<div style="left:1689px;top:238px;width:2.5px;height:4px;background:#1f5bb5"></div>
<div style="left:1689px;top:258px;width:2.5px;height:4px;background:#1f5bb5"></div>
<div style="left:1819.5px;top:178px;width:1px;height:1086px;background:#ececec"></div>
<div style="left:1820px;top:297px;width:27px;height:4px;background:#444"></div>
<div style="left:1820px;top:339px;width:9px;height:12px;background:#6c99d6"></div>
<div style="left:1820px;top:399px;width:9px;height:12px;background:#6c99d6"></div>
<div style="left:1342.5px;top:1156.5px;width:456.5px;height:59.5px;background:#f8f8f8;border-radius:14px;box-shadow:0 3px 14px rgba(0,0,0,.16),0 0 2px rgba(0,0,0,.08)"></div>
<div style="left:1350px;top:1164px;width:77px;height:44px;background:#285fb4;border:1px solid #2354a6;border-radius:8.5px"></div>
<span class="t" style='left:1362.00px;top:1173.50px;font:400 23.5px/26px "Liberation Sans", sans-serif;color:#fff;letter-spacing:-0.704px;-webkit-text-stroke:0.5px #fff;'>Keep</span>
<span class="t" style='left:1447.00px;top:1173.50px;font:400 23.5px/26px "Liberation Sans", sans-serif;color:#3b3b3b;letter-spacing:-0.370px;'>Undo</span>
<svg style="left:1528px;top:1170px;" width="32" height="32" viewBox="0 0 16 16" fill="none" stroke="#3b3b3b" stroke-width="1.0" stroke-linecap="round" stroke-linejoin="round"><path d="M3.200 2.800a1.400 1.400 0 0 1 1.400-1.400h4.600l3.600 3.600v8.200a1.400 1.400 0 0 1-1.400 1.400H4.600a1.400 1.400 0 0 1-1.400-1.400z"/><path d="M5.800 6.800h4.400M8 4.600V9M5.800 11.600h4.400"/></svg>
<div style="left:1583px;top:1170px;width:2px;height:32px;background:#c4c4c4"></div>
<span class="t" style='left:1613.60px;top:1171.50px;font:400 25px/28px "Liberation Sans", sans-serif;color:#3b3b3b;letter-spacing:-0.289px;'>2 of 9</span>
<svg style="left:1702px;top:1170px;" width="32" height="32" viewBox="0 0 16 16" fill="none" stroke="#3b3b3b" stroke-width="1.0" stroke-linecap="round" stroke-linejoin="round"><path d="M8 14V2.600M2.800 7.600L8 2.400l5.200 5.200"/></svg>
<svg style="left:1754px;top:1170px;" width="32" height="32" viewBox="0 0 16 16" fill="none" stroke="#3b3b3b" stroke-width="1.0" stroke-linecap="round" stroke-linejoin="round"><path d="M8 2v11.400M2.800 8.400L8 13.600l5.200-5.200"/></svg>
<svg style="left:1870px;top:86px;" width="48" height="52" viewBox="0 0 28 30" fill="none" stroke="#616161" stroke-width="1.9" stroke-linecap="round" stroke-linejoin="round"><path d="M9.500 2.500h9.200l6.300 6.300v13.200a2.500 2.500 0 0 1-2.500 2.500h-13a2.500 2.500 0 0 1-2.500-2.500V5a2.500 2.500 0 0 1 2.500-2.500z"/><path d="M18.500 2.800v6.200h6.200"/><path d="M3.500 6.500v17a4.500 4.500 0 0 0 4.500 4.500h11"/></svg>
<svg style="left:1870px;top:184px;" width="48" height="48" viewBox="0 0 48 48" fill="none" stroke="#616161" stroke-width="3.2" stroke-linecap="round" stroke-linejoin="round"><circle cx="20.500" cy="19.500" r="15"/><path d="M31.500 30.500l12.500 12.500"/></svg>
<svg style="left:1870px;top:276px;" width="48" height="56" viewBox="0 0 48 56" fill="none" stroke="#616161" stroke-width="3.2" stroke-linecap="round" stroke-linejoin="round"><circle cx="14.300" cy="11.600" r="5.600"/><circle cx="35.800" cy="20.300" r="5.600"/><circle cx="14.300" cy="44.800" r="5.600"/><path d="M14.300 17.200v22M14.300 33h14a7.500 7.500 0 0 0 7.500-7.100"/></svg>
<div style="left:1895px;top:304px;width:32px;height:32px;background:#285fb4;border-radius:50%"></div>
<span class="t" style='left:1905.50px;top:310.00px;font:700 19px/21px "Liberation Sans", sans-serif;color:#fff;letter-spacing:0.000px;'>6</span>
<svg style="left:1866px;top:378px;" width="52" height="50" viewBox="0 0 52 50" fill="none" stroke="#616161" stroke-width="3.0" stroke-linecap="round" stroke-linejoin="round"><path d="M15.500 26V8.800a2.500 2.500 0 0 1 3.700-2.200l24 12.600a2.500 2.500 0 0 1 0 4.400L31 30"/><path d="M9.500 30.500a7.500 7.500 0 0 1 15 0v6a7.500 7.500 0 0 1-15 0z"/><path d="M11 27.500a6.500 4.500 0 0 1 12 0M9.500 33.500H5M29 33.500h-4.500M10.500 28l-4-4M23.500 28l4-4M10.500 40l-4 4M23.500 40l4 4"/></svg>
<svg style="left:1868px;top:472px;" width="56" height="48" viewBox="0 0 56 48" fill="none" stroke="#616161" stroke-width="3.0" stroke-linecap="round" stroke-linejoin="round"><path d="M40.800 22V9.500a4.500 4.500 0 0 0-4.500-4.500h-26.800a4.500 4.500 0 0 0-4.500 4.500v21a4.500 4.500 0 0 0 4.500 4.500h14.500M17 35v6M11.500 41h12"/><circle cx="37" cy="34.500" r="13" fill="#616161" stroke="none"/><path d="M30.500 31l4.500 4-4.500 4M43.500 29l-4.500 4 4.500 4" stroke="#f8f8f8" stroke-width="2.600"/></svg>
<svg style="left:1870px;top:568px;" width="50" height="48" viewBox="0 0 50 48" fill="none" stroke="#616161" stroke-width="3.0" stroke-linecap="round" stroke-linejoin="round"><rect x="5.800" y="6.500" width="18.500" height="18.500" rx="3"/><rect x="5.800" y="25" width="18.500" height="18.500" rx="3"/><rect x="24.300" y="25" width="18.500" height="18.500" rx="3"/><rect x="26.500" y="5.300" width="15.500" height="15.500" rx="3" transform="rotate(45 34.200 13)"/></svg>
<svg style="left:1871px;top:1096px;" width="48" height="48" viewBox="0 0 48 48" fill="none" stroke="#616161" stroke-width="3.0" stroke-linecap="round" stroke-linejoin="round"><circle cx="24" cy="23.700" r="19.500"/><circle cx="24" cy="16" r="6" fill="#616161" stroke="none"/><path d="M13.500 27h21a1.500 1.500 0 0 1 1.500 1.500c0 5-5 9-12 9s-12-4-12-9a1.500 1.500 0 0 1 1.500-1.500z" fill="#616161" stroke="none"/></svg>
<div style="left:1895px;top:1120px;width:32px;height:32px;background:#285fb4;border-radius:50%"></div>
<span class="t" style='left:1905.50px;top:1126.00px;font:700 19px/21px "Liberation Sans", sans-serif;color:#fff;letter-spacing:0.000px;'>1</span>
<svg style="left:1871px;top:1192px;" width="48" height="48" viewBox="0 0 48 48" fill="none" stroke="#616161" stroke-width="3.0" stroke-linecap="round" stroke-linejoin="round"><path d="M19.52 10.21L20.46 4.32L27.54 4.32L28.48 10.21L33.70 13.22L39.28 11.09L42.82 17.23L38.18 20.99L38.18 27.01L42.82 30.77L39.28 36.91L33.70 34.78L28.48 37.79L27.54 43.68L20.46 43.68L19.52 37.79L14.30 34.78L8.72 36.91L5.18 30.77L9.82 27.01L9.82 20.99L5.18 17.23L8.72 11.09L14.30 13.22Z"/><circle cx="24" cy="24" r="5.5"/></svg>
<svg style="left:12px;top:1268px;" width="30" height="32" viewBox="0 0 30 32" fill="none" stroke="#3b3b3b" stroke-width="2.1" stroke-linecap="round" stroke-linejoin="round"><path d="M5.600 12.700l8.600 8.050-8.600 8.250M24.100 4.700l-8.300 8.300 8.300 8.400"/></svg>
<svg style="left:76px;top:1269px;" width="34" height="32" viewBox="0 0 17 16" fill="none" stroke="#3b3b3b" stroke-width="1.0" stroke-linecap="round" stroke-linejoin="round"><circle cx="4" cy="3.200" r="1.750"/><circle cx="4" cy="14" r="1.750"/><path d="M4 5v7.200M8.800 8.600V7a2.400 2.400 0 0 1 4.800 0v1.200"/><circle cx="11.200" cy="12.150" r="4.400" fill="#3b3b3b" stroke="none"/><path d="M11.200 9.800v4.700M9.150 10.980l4.100 2.350M13.250 10.980l-4.100 2.350" stroke="#f8f8f8" stroke-width="1.050"/></svg>
<span class="t" style='left:113.50px;top:1273.00px;font:400 24px/27px "Liberation Sans", sans-serif;color:#3b3b3b;letter-spacing:0.745px;'>main*</span>
<svg style="left:191px;top:1269px;" width="34" height="32" viewBox="0 0 17 16" fill="none" stroke="#3b3b3b" stroke-width="1.0" stroke-linecap="round" stroke-linejoin="round"><path d="M6.800 12.900H4.500a3.100 3.100 0 0 1-3.100-3.100a3.100 3.100 0 0 1 2.750-3.080a3.800 3.800 0 0 1 7.450-.120a3 3 0 0 1 1.300.450"/><circle cx="11.500" cy="11.950" r="4.400" fill="#3b3b3b" stroke="none"/><path d="M11.500 14.300V9.800M9.500 11.700l2-2 2 2" stroke="#f8f8f8" stroke-width="1.100"/></svg>
<svg style="left:255px;top:1269.7px;" width="32" height="32" viewBox="0 0 16 16" fill="none" stroke="#3b3b3b" stroke-width="1.0" stroke-linecap="round" stroke-linejoin="round"><circle cx="8" cy="8" r="6.500"/><path d="M5.400 5.400l5.200 5.200M10.600 5.400l-5.200 5.200"/></svg>
<span class="t" style='left:295.00px;top:1273.00px;font:400 24px/27px "Liberation Sans", sans-serif;color:#3b3b3b;letter-spacing:0.000px;'>0</span>
<svg style="left:316px;top:1269.7px;" width="32" height="32" viewBox="0 0 16 16" fill="none" stroke="#3b3b3b" stroke-width="1.0" stroke-linecap="round" stroke-linejoin="round"><path d="M8 1.900a1 1 0 0 1 .9.500l5.700 10.200a1 1 0 0 1-.9 1.500H2.300a1 1 0 0 1-.9-1.500L7.100 2.400a1 1 0 0 1 .9-.5z"/><path d="M8 6v4M8 11.800v.2"/></svg>
<span class="t" style='left:355.00px;top:1273.00px;font:400 24px/27px "Liberation Sans", sans-serif;color:#3b3b3b;letter-spacing:0.000px;'>0</span>
<span class="t" style='left:686.50px;top:1273.00px;font:400 24px/27px "Liberation Sans", sans-serif;color:#3b3b3b;letter-spacing:0.630px;'>Ln 13, Col 7</span>
<span class="t" style='left:857.30px;top:1273.00px;font:400 24px/27px "Liberation Sans", sans-serif;color:#3b3b3b;letter-spacing:0.401px;'>Tab Size: 4</span>
<span class="t" style='left:1012.40px;top:1273.00px;font:400 24px/27px "Liberation Sans", sans-serif;color:#3b3b3b;letter-spacing:0.989px;'>UTF-8</span>
<span class="t" style='left:1117.50px;top:1273.00px;font:400 24px/27px "Liberation Sans", sans-serif;color:#3b3b3b;letter-spacing:-0.848px;'>LF</span>
<svg style="left:1178px;top:1269px;" width="32" height="32" viewBox="0 0 16 16" fill="none" stroke="#3b3b3b" stroke-width="1.0" stroke-linecap="round" stroke-linejoin="round"><path d="M4.600 2.800c-1.300 0-1.900.600-1.900 1.800v2.100c0 .900-.400 1.400-1.200 1.700.800.300 1.200.800 1.200 1.700v2.100c0 1.200.600 1.800 1.900 1.800M10.400 2.800c1.300 0 1.900.600 1.900 1.800v2.100c0 .600.200 1 .600 1.300"/><circle cx="11.600" cy="13.300" r="3.100" fill="#3b3b3b" stroke="none"/><path d="M10.400 12.100l2.400 2.400M12.800 12.100l-2.400 2.400" stroke="#f8f8f8" stroke-width=".9"/></svg>
<span class="t" style='left:1221.50px;top:1273.00px;font:400 24px/27px "Liberation Sans", sans-serif;color:#3b3b3b;letter-spacing:0.614px;'>JavaScript</span>
<svg style="left:1370px;top:1270px;" width="36" height="30" viewBox="0 0 36 30" fill="none" stroke="#3b3b3b" stroke-width="2.6" stroke-linecap="round" stroke-linejoin="round"><rect x="7.500" y="4" width="9.300" height="8.600" rx="3.600"/><rect x="19.200" y="4" width="9.300" height="8.600" rx="3.600"/><path d="M6.300 11.500C4 12.800 3.300 15.500 3.300 18v3c0 4.200 7.700 7.200 14.700 7.200s14.700-3 14.700-7.200v-3c0-2.500-.700-5.200-3-6.500"/><path d="M13.600 18.600v5M22.400 18.600v5" stroke-width="2.800"/></svg>
<span class="t" style='left:1435.50px;top:1273.00px;font:400 24px/27px "Liberation Sans", sans-serif;color:#3b3b3b;letter-spacing:-0.054px;'>Foo</span>
<svg style="left:1484px;top:1269px;" width="32" height="32" viewBox="0 0 16 16" fill="none" stroke="#3b3b3b" stroke-width="1.0" stroke-linecap="round" stroke-linejoin="round"><path d="M6.800 1.800h4.600L9.300 6.400h3.500L5.600 14.400l1.600-5.600H3.900z"/></svg>
<span class="t" style='left:1549.00px;top:1273.00px;font:400 24px/27px "Liberation Sans", sans-serif;color:#3b3b3b;letter-spacing:-0.141px;'>AAAA</span>
<span class="t" style='left:1645.50px;top:1273.00px;font:400 24px/27px "Liberation Sans", sans-serif;color:#3b3b3b;letter-spacing:-0.374px;'>BBBB</span>
<svg style="left:1740px;top:1269px;" width="32" height="32" viewBox="0 0 16 16" fill="none" stroke="#3b3b3b" stroke-width="1.0" stroke-linecap="round" stroke-linejoin="round"><path d="M1.200 8.800l2.600 2.800L11 4.400M6.400 10.200l1.400 1.400L15 4.400"/></svg>
<span class="t" style='left:1779.00px;top:1273.00px;font:400 24px/27px "Liberation Sans", sans-serif;color:#3b3b3b;letter-spacing:0.877px;'>Prettier</span>
<svg style="left:1896px;top:1269px;" width="32" height="32" viewBox="0 0 16 16" fill="none" stroke="#3b3b3b" stroke-width="1.0" stroke-linecap="round" stroke-linejoin="round"><path d="M8 2a4.300 4.300 0 0 0-4.300 4.300v2.800L2.500 11.300a.6.600 0 0 0 .5.900h10a.6.600 0 0 0 .5-.9l-1.200-2.200V8.500M6.400 12.400a1.600 1.600 0 0 0 3.200 0"/><circle cx="12" cy="4" r="2.600" fill="#3b3b3b" stroke="none"/></svg>
<div style="left:0px;top:1307px;width:1943px;height:1px;background:linear-gradient(#f8f8f8,#d9d9d9)"></div>
<div style="left:0px;top:1308px;width:1943px;height:1px;background:#8e8e8e"></div>
</div></body></html>
